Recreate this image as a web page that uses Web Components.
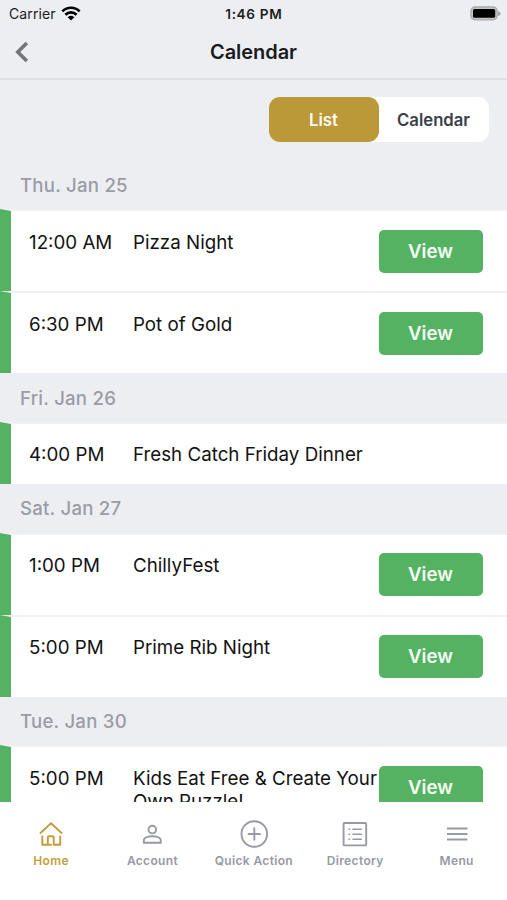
<!DOCTYPE html>
<html lang="en">
<head>
<meta charset="utf-8">
<title>Calendar</title>
<style>
html,body{margin:0;height:100%}
body{font-family:Inter,"Liberation Sans",sans-serif;overflow:hidden;background:#fff}
</style>
</head>
<body>
<calendar-app></calendar-app>
<script>
function define(name, html) {
  customElements.define(name, class extends HTMLElement {
    constructor() {
      super();
      const t = document.createElement('template');
      t.innerHTML = html;
      this.attachShadow({ mode: 'open' }).append(t.content.cloneNode(true));
    }
  });
}

define('status-bar', `<style>
:host{display:grid;grid-template-columns:1fr auto 1fr;align-items:center;height:27px;padding:0 6px 0 9px;box-sizing:border-box;font-size:14px;color:#1c1c1f}
.l{display:flex;align-items:center;gap:5.5px;letter-spacing:.1px}
.t{font-weight:600;font-size:13.6px;letter-spacing:.65px;margin-right:2.4px}
.r{display:flex;justify-content:flex-end}
svg{display:block}
</style>
<div class="l"><span>Carrier</span><svg width="20" height="16" viewBox="0 0 20 16"><g fill="none" stroke="#000" stroke-width="2.6"><path d="M1.3 5.4C6.3 .5 13.7 .5 18.7 5.4"/><path d="M4.4 8.7C7.6 5.6 12.4 5.6 15.6 8.7"/></g><path d="M6.7 11.2Q10 8.4 13.3 11.2L10 14.5Z"/></svg></div>
<div class="t">1:46 PM</div>
<div class="r"><svg width="31" height="16" viewBox="0 0 31 16"><rect x="1" y="1" width="26.2" height="12.8" rx="4" fill="#c4c4c7" stroke="#a9a9ac" stroke-width="1.3"/><rect x="3" y="3" width="22.2" height="8.8" rx="1.6"/><path d="M28.2 5Q30.7 6 30.7 7.5T28.2 10Z" fill="#a0a0a3"/></svg></div>`);

define('nav-bar', `<style>
:host{display:grid;grid-template-columns:1fr auto 1fr;align-items:center;height:53px;box-sizing:border-box;padding:0 14px 1.4px;border-bottom:2px solid #dfe0e3;color:#1b1b1e;font-size:20px;font-weight:600}
svg{display:block}
.t{letter-spacing:-.05px}
</style><svg width="16" height="22" viewBox="0 0 16 22"><path d="M12.8 2L3.8 11L12.8 20" fill="none" stroke="#757577" stroke-width="3.6"/></svg><span class="t"><slot></slot></span>`);

define('segment-control', `<style>
:host{display:flex;width:220px;height:45px;border-radius:11px;background:#fff;font-size:16.7px;font-weight:600;color:#3b3e49}
::slotted(*){flex:1;display:flex;align-items:center;justify-content:center;border-radius:11px}
::slotted([selected]){background:#bb9838;color:#fffdf3}
</style><slot></slot>`);

define('day-group', `<style>
:host{display:block}
.h{height:48.8px;display:flex;align-items:center;padding:0 20px;box-sizing:border-box;color:#9a9ca6;font-size:18.6px;font-weight:550;letter-spacing:.23px}
</style><div class="h"><slot name="day"></slot></div><slot></slot>`);

define('event-row', `<style>
:host{display:grid;grid-template-columns:104px 245.5px 104px;height:82px;box-sizing:border-box;border-top:2px solid #f1f1f3;border-left:11px solid #56b263;background:#fff;padding:19px 0 0 18px;font-size:18.75px;line-height:23px;color:#121212}
:host([plain]){height:61.6px}
.m,.n{margin-top:.2px}
.a{display:flex;align-items:center;justify-content:center;width:104px;height:43px;margin-top:-.2px;border-radius:5px;background:#56b263;color:#f5fff5;font-weight:600;font-size:18.7px}
:host([plain]) .a{display:none}
</style><span class="m"><slot name="time"></slot></span><span class="n"><slot></slot></span><span class="a">View</span>`);

define('tab-item', `<style>
:host{display:flex;flex-direction:column;align-items:center;width:101.4px;padding:17px 0 0 .8px;box-sizing:border-box;color:#9799a3;font-size:12px;font-weight:600;gap:4px;line-height:16px;letter-spacing:.35px;white-space:nowrap}
:host([active]){color:#c39d3d}
::slotted(svg){display:block;width:30px;height:30px;fill:none;stroke:currentColor;stroke-width:1.9;stroke-linecap:round;stroke-linejoin:round}
</style><slot name="icon"></slot><span><slot></slot></span>`);

define('calendar-app', `<style>
:host{display:flex;flex-direction:column;height:900px;width:507px;background:#edeef2;overflow:hidden}
.seg{display:flex;justify-content:flex-end;padding:17.4px 18.5px 0 0;height:80.6px;box-sizing:border-box}
main{flex:1;min-height:0;overflow:hidden}
nav{display:flex;height:98px;background:#fff;flex:none}
</style>
<status-bar></status-bar>
<nav-bar>Calendar</nav-bar>
<main>
<div class="seg"><segment-control><span selected>List</span><span>Calendar</span></segment-control></div>
<day-group><span slot="day">Thu. Jan 25</span>
<event-row><span slot="time">12:00 AM</span>Pizza Night</event-row>
<event-row><span slot="time">6:30 PM</span>Pot of Gold</event-row></day-group>
<day-group><span slot="day">Fri. Jan 26</span>
<event-row plain><span slot="time">4:00 PM</span>Fresh Catch Friday Dinner</event-row></day-group>
<day-group><span slot="day">Sat. Jan 27</span>
<event-row><span slot="time">1:00 PM</span>ChillyFest</event-row>
<event-row><span slot="time">5:00 PM</span>Prime Rib Night</event-row></day-group>
<day-group><span slot="day">Tue. Jan 30</span>
<event-row><span slot="time">5:00 PM</span>Kids Eat Free &amp; Create Your Own Puzzle!</event-row></day-group>
</main>
<nav>
<tab-item active><svg slot="icon" viewBox="0 0 30 30"><path d="M4.5 14L15 4.2L25.5 14M6.3 17.5V25.7H11.8V18.5Q11.8 17.3 13 17.3H16.5Q17.7 17.3 17.7 18.5V25.7H24.2V17.5M15 25.7H11.8M17.7 25.7"/></svg>Home</tab-item>
<tab-item><svg slot="icon" viewBox="0 0 30 30"><circle cx="15.3" cy="10.6" r="3.8"/><path d="M6.8 23.8V21.5C6.8 15.9 23.8 15.9 23.8 21.5V23.8Z"/></svg>Account</tab-item>
<tab-item><svg slot="icon" viewBox="0 0 30 30"><circle cx="15.3" cy="15" r="12.8"/><path d="M15.3 9.3V20.7M9.6 15H21"/></svg>Quick Action</tab-item>
<tab-item><svg slot="icon" viewBox="0 0 30 30"><rect x="3.6" y="4" width="22.6" height="22.4" rx="1"/><path d="M9 10.2H9.6M9 15.2H9.6M9 20.2H9.6M13 10.2H21.3M13 15.2H21.3M13 20.2H21.3" stroke-width="1.6"/></svg>Directory</tab-item>
<tab-item><svg slot="icon" viewBox="0 0 30 30"><path d="M5 9.5H25.4M5 15H25.4M5 20.5H25.4" stroke-linecap="butt"/></svg>Menu</tab-item>
</nav>`);
</script>
</body>
</html>
